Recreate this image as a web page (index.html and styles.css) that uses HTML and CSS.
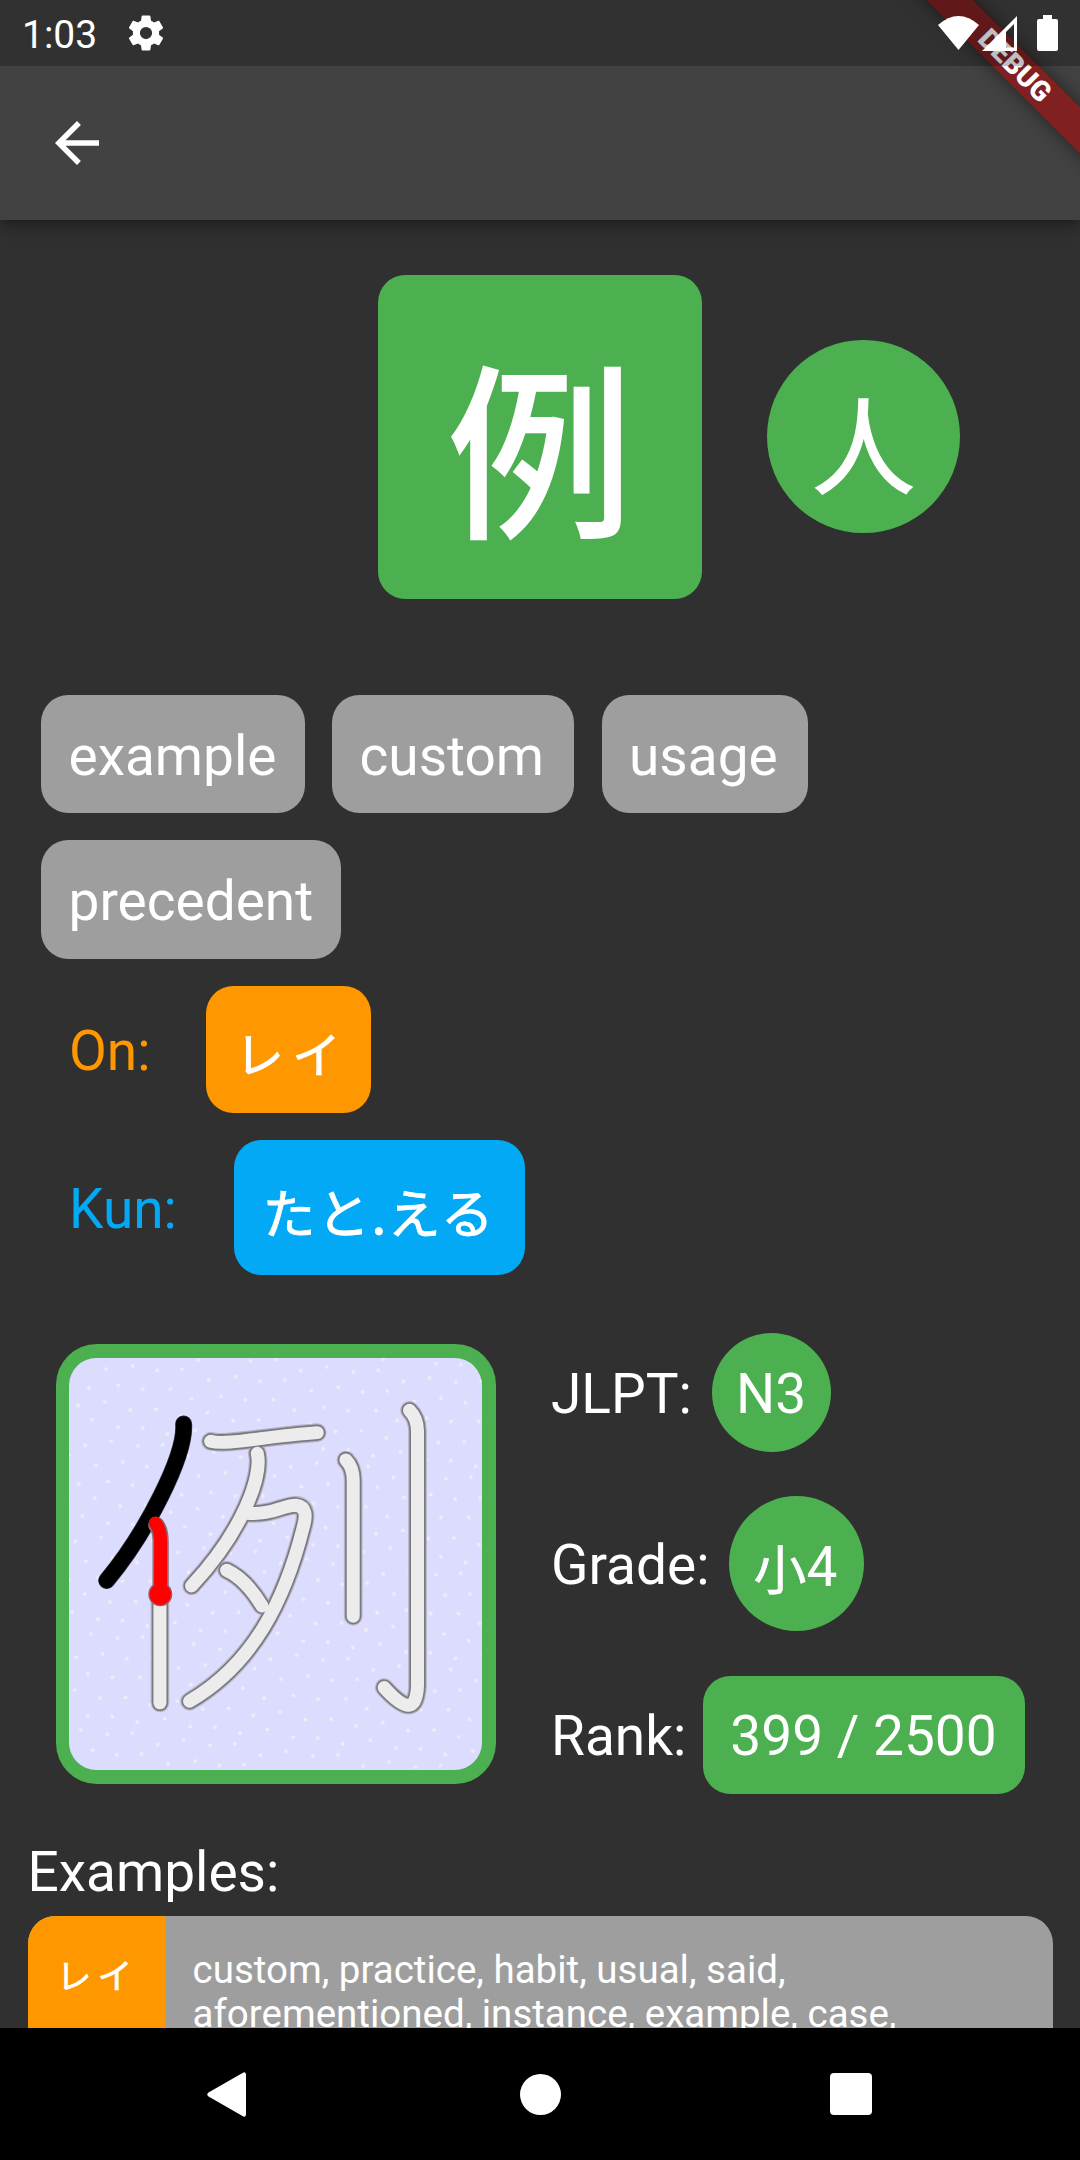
FILE: index.html
```html
<!DOCTYPE html>
<html lang="en">
<head>
<meta charset="utf-8">
<title>Kanji details</title>
<link rel="stylesheet" href="styles.css">
</head>
<body>
<div class="screen">
  <header class="app-bar">
    <div class="toolbar">
      <svg class="back" viewBox="0 0 24 24"><path d="M20 11H7.83l5.59-5.59L12 4l-8 8 8 8 1.41-1.41L7.83 13H20z"/></svg>
    </div>
  </header>

  <main class="content">
    <section class="hero">
      <div class="kanji"><span>例</span></div>
      <div class="radical"><span>人</span></div>
    </section>

    <section class="meanings">
      <span class="chip">example</span>
      <span class="chip custom">custom</span>
      <span class="chip usage">usage</span>
      <span class="chip">precedent</span>
    </section>

    <section class="reading on">
      <span class="reading-label">On:</span>
      <span class="reading-chip" lang="ja">レイ</span>
    </section>
    <section class="reading kun">
      <span class="reading-label">Kun:</span>
      <span class="reading-chip" lang="ja">たと.える</span>
    </section>

    <section class="details">
      <div class="stroke-card">
        <svg class="strokes" viewBox="87 83 1238 1236">
          <defs>
            <pattern id="specks" width="310" height="290" patternUnits="userSpaceOnUse" patternTransform="rotate(6)">
              <g fill="#efeff2">
                <circle cx="18" cy="24" r="5.500"/><circle cx="92" cy="12" r="5.500"/><circle cx="171" cy="38" r="5.500"/><circle cx="247" cy="18" r="5.500"/>
                <circle cx="52" cy="82" r="5.500"/><circle cx="126" cy="71" r="5.500"/><circle cx="209" cy="94" r="5.500"/><circle cx="288" cy="76" r="5.500"/>
                <circle cx="15" cy="142" r="5.500"/><circle cx="98" cy="133" r="5.500"/><circle cx="164" cy="156" r="5.500"/><circle cx="251" cy="139" r="5.500"/>
                <circle cx="61" cy="198" r="5.500"/><circle cx="137" cy="211" r="5.500"/><circle cx="216" cy="192" r="5.500"/><circle cx="294" cy="208" r="5.500"/>
                <circle cx="27" cy="259" r="5.500"/><circle cx="103" cy="268" r="5.500"/><circle cx="184" cy="249" r="5.500"/><circle cx="263" cy="264" r="5.500"/>
              </g>
            </pattern>
            <g id="pending">
              <path d="M360 780V1117"/>
              <path d="M512 332C560 345 680 316 832 306"/>
              <path d="M560 719Q618 746 666 826"/>
              <path d="M652 368C668 435 610 600 455 766"/>
              <path d="M618 547C690 556 735 522 768 524C800 528 800 556 790 590C735 810 640 1000 449 1112"/>
              <path d="M918 388Q940 410 940 450V857"/>
              <path d="M1109 239Q1132 262 1133 300V1065C1130 1140 1100 1145 1033 1071"/>
            </g>
          </defs>
          <rect x="80" y="80" width="1250" height="1250" fill="#dcdcff"/>
          <rect x="80" y="80" width="1250" height="1250" fill="url(#specks)"/>
          <g fill="none" stroke-linecap="round" stroke-linejoin="round">
            <use href="#pending" stroke="#b5b3c4" stroke-width="56"/>
            <use href="#pending" stroke="#7c7a80" stroke-width="49"/>
            <use href="#pending" stroke="#ececec" stroke-width="39"/>
            <path d="M431 280C438 375 318 608 200 750" stroke="#3a3a48" stroke-width="51"/>
            <path d="M431 280C438 375 318 608 200 750" stroke="#000" stroke-width="47"/>
            <path d="M349 583Q362 598 362 635V790" stroke="#8b6f7c" stroke-width="49"/>
            <path d="M346 577Q362 594 362 635V790" stroke="#f00" stroke-width="39"/>
          </g>
          <circle cx="361" cy="791" r="34" fill="#f00" stroke="#a85868" stroke-width="4"/>
          <path d="M362 700V790" stroke="#f00" stroke-width="37"/>
        </svg>
      </div>
      <div class="facts">
        <div class="fact"><span class="fact-label jlpt">JLPT:</span><span class="badge round">N3</span></div>
        <div class="fact"><span class="fact-label grade">Grade:</span><span class="badge round large"><span class="school">小</span>4</span></div>
        <div class="fact"><span class="fact-label rank">Rank:</span><span class="badge wide">399 / 2500</span></div>
      </div>
    </section>

    <h2 class="examples-title">Examples:</h2>
    <article class="example">
      <div class="example-reading" lang="ja">レイ</div>
      <p class="example-text">custom, practice, habit, usual, said,<br>aforementioned, instance, example, case,</p>
    </article>
  </main>

  <nav class="nav-bar">
    <svg class="nav-back" viewBox="0 0 39 45"><path d="M39 2V43Q38 46 35.500 44L1.500 24.500Q-1 22.500 1.500 20.500L35.500 1Q38-1 39 2Z"/></svg>
    <span class="nav-home"></span>
    <span class="nav-recent"></span>
  </nav>

  <div class="debug-corner"><div class="debug-band">DEBUG</div></div>

  <div class="status-bar">
    <span class="clock">1:03</span>
    <svg class="gear" viewBox="0 0 24 24"><path d="M19.430 12.980c.04-.32.07-.64.07-.98s-.03-.66-.07-.98l2.110-1.650c.19-.15.24-.42.12-.64l-2-3.460c-.12-.22-.39-.3-.61-.22l-2.490 1c-.52-.4-1.080-.73-1.690-.98l-.38-2.650A.488.488 0 0 0 14 2h-4c-.25 0-.46.18-.49.42l-.38 2.650c-.61.25-1.170.59-1.690.98l-2.490-1c-.23-.09-.49 0-.61.22l-2 3.460c-.13.22-.07.49.12.64l2.110 1.650c-.04.32-.07.65-.07.98s.03.66.07.98l-2.110 1.650c-.19.15-.24.42-.12.64l2 3.460c.12.22.39.3.61.22l2.490-1c.52.4 1.080.73 1.690.98l.38 2.650c.03.24.24.42.49.42h4c.25 0 .46-.18.49-.42l.38-2.650c.61-.25 1.170-.59 1.690-.98l2.490 1c.23.09.49 0 .61-.22l2-3.460c.12-.22.07-.49-.12-.64zM12 15.500A3.500 3.500 0 1 1 12 8.500a3.500 3.500 0 0 1 0 7z"/></svg>
    <svg class="wifi" viewBox="0 0 41 34"><path d="M20.500 34L0 9Q20.500-9 41 9Z"/></svg>
    <svg class="signal" viewBox="0 0 35 35"><path fill-rule="evenodd" d="M35 0V35H0ZM24 16V31.500H32V8Z"/></svg>
    <svg class="battery" viewBox="0 0 21 36"><path d="M6 0H15V4H19Q21 4 21 6V34Q21 36 19 36H2Q0 36 0 34V6Q0 4 2 4H6Z"/></svg>
  </div>
</div>
</body>
</html>
```
FILE: styles.css
```css
* { box-sizing: border-box; }

body {
  margin: 0;
  background: #303030;
  color: #fff;
  font-family: Roboto, "Noto Sans CJK JP", sans-serif;
  font-size: 55px;
  line-height: 64px;
}

svg { display: block; fill: #fff; flex: none; }

.screen {
  position: relative;
  display: flex;
  flex-direction: column;
  width: 1080px;
  height: 2160px;
  overflow: hidden;
}

/* App bar */
.app-bar {
  flex: none;
  height: 220px;
  padding-top: 66px;
  background: #424242;
  box-shadow: 0 5px 11px -2px rgba(0, 0, 0, .3), 0 3px 20px rgba(0, 0, 0, .22);
  z-index: 1;
}
.toolbar { display: flex; align-items: center; height: 154px; padding-left: 44px; }
.back { width: 66px; height: 66px; }

.content { flex: 1; min-height: 0; overflow: hidden; padding-top: 54.500px; }

/* Kanji and its radical */
.hero {
  display: grid;
  grid-template-columns: 1fr 324px 1fr;
  align-items: center;
  height: 324px;
}
.kanji, .radical {
  display: flex;
  align-items: center;
  justify-content: center;
  background: #4caf50;
  font-family: "Noto Sans CJK SC", sans-serif;
}
.kanji {
  grid-column: 2;
  height: 324px;
  border-radius: 27.5px;
  font-size: 188px;
  font-weight: 500;
  line-height: 280px;
  padding-top: 10px;
}
.radical {
  justify-self: start;
  width: 193px;
  height: 193px;
  margin-left: 65px;
  border-radius: 50%;
  font-size: 104px;
  line-height: 160px;
  padding-top: 10px;
  -webkit-text-stroke: 1.500px #fff;
}

/* Meaning chips */
.meanings {
  display: flex;
  flex-wrap: wrap;
  gap: 27px 27.5px;
  margin-top: 96px;
  padding: 0 41px;
}
.chip {
  height: 118.5px;
  padding: 29px 28px 0 27.5px;
  border-radius: 27.5px;
  background: #9e9e9e;
}
.custom { width: 242px; }
.usage { width: 206px; }

/* Readings */
.reading { display: flex; align-items: center; margin-top: 27px; padding-left: 69px; }
.reading-chip {
  border-radius: 27.5px;
  padding-left: 29px;
  font-family: "Noto Sans CJK JP", sans-serif;
  -webkit-text-stroke: .8px #fff;
}
.reading-label { padding-top: 4px; }
.on .reading-label { width: 137px; color: #ff9800; }
.on .reading-chip { width: 165px; height: 127px; line-height: 132px; background: #ff9800; font-size: 49px; letter-spacing: 8px; }
.kun .reading-label { width: 164.500px; color: #03a9f4; }
.kun .reading-chip { width: 291.500px; height: 135px; line-height: 143px; background: #03a9f4; font-size: 53px; letter-spacing: 1.500px; }

/* Stroke order and facts */
.details { display: flex; height: 461px; margin-top: 58.500px; padding-left: 55.500px; }
.stroke-card {
  flex: none;
  width: 440px;
  height: 440px;
  margin-top: 11px;
  padding: 13.75px;
  border-radius: 41px;
  background: #4caf50;
}
.strokes { width: 412.500px; height: 412.500px; border-radius: 27.5px; }
.facts {
  display: flex;
  flex-direction: column;
  justify-content: space-between;
  margin-left: 55.500px;
}
.fact { display: flex; align-items: center; }
.jlpt { width: 161px; }
.grade { width: 177.500px; }
.rank { width: 152px; }
.fact-label { padding-top: 3px; }
.badge {
  display: flex;
  align-items: center;
  justify-content: center;
  padding-top: 3px;
  padding-right: 1px;
  background: #4caf50;
  white-space: nowrap;
}
.round { width: 119px; height: 119px; border-radius: 50%; }
.large { width: 135px; height: 135px; padding-top: 6px; }
.school { font-family: "Noto Sans CJK SC", sans-serif; font-size: 53px; -webkit-text-stroke: .6px #fff; }
.wide { width: 322px; height: 118.500px; border-radius: 27.5px; }

/* Examples */
.examples-title { margin: 46px 0 0; padding-left: 27.5px; font-size: 55px; font-weight: 400; line-height: 64px; }
.example {
  display: flex;
  width: 1025px;
  height: 220px;
  margin: 12px 0 0 27.5px;
  border-radius: 27.5px;
  background: #9e9e9e;
  overflow: hidden;
  font-size: 38.500px;
  line-height: 44px;
}
.example-reading {
  width: 137.500px;
  padding: 36px 0 0 29px;
  background: #ff9800;
  font-family: "Noto Sans CJK JP", sans-serif;
  font-size: 35px;
  letter-spacing: 6px;
  -webkit-text-stroke: .6px #fff;
}
.example-text { margin: 0; padding: 32px 0 0 27.5px; white-space: nowrap; }

/* System navigation */
.nav-bar {
  display: flex;
  flex: none;
  align-items: center;
  height: 132px;
  padding-left: 206.500px;
  background: #000;
  z-index: 1;
}
.nav-back { width: 39px; height: 45px; }
.nav-home { width: 41px; height: 41px; margin-left: 274px; border-radius: 50%; background: #fff; }
.nav-recent { width: 42px; height: 42px; margin-left: 269px; border-radius: 4px; background: #fff; }

/* Debug ribbon laid across the corner */
.debug-corner {
  position: absolute;
  top: 0;
  right: 0;
  width: 220px;
  height: 220px;
  overflow: hidden;
  z-index: 2;
}
.debug-band {
  position: absolute;
  left: 5px;
  top: 49px;
  width: 300px;
  height: 33px;
  rotate: 45deg;
  background: #802020;
  box-shadow: 0 0 17px rgba(0, 0, 0, .5);
  font-size: 28px;
  font-weight: 900;
  line-height: 34px;
  text-align: center;
}

/* Translucent status bar over the app */
.status-bar {
  position: absolute;
  inset: 0 0 auto;
  display: flex;
  align-items: center;
  height: 66px;
  padding: 0 22px;
  background: rgba(0, 0, 0, .25);
  z-index: 3;
}
.clock { width: 103px; padding-top: 3px; font-size: 39px; }
.gear { width: 42px; height: 42px; margin-right: auto; }
.wifi { width: 41px; height: 34px; margin-right: 3px; }
.signal { width: 35px; height: 35px; margin-right: 20px; }
.battery { width: 21px; height: 36px; }
```
